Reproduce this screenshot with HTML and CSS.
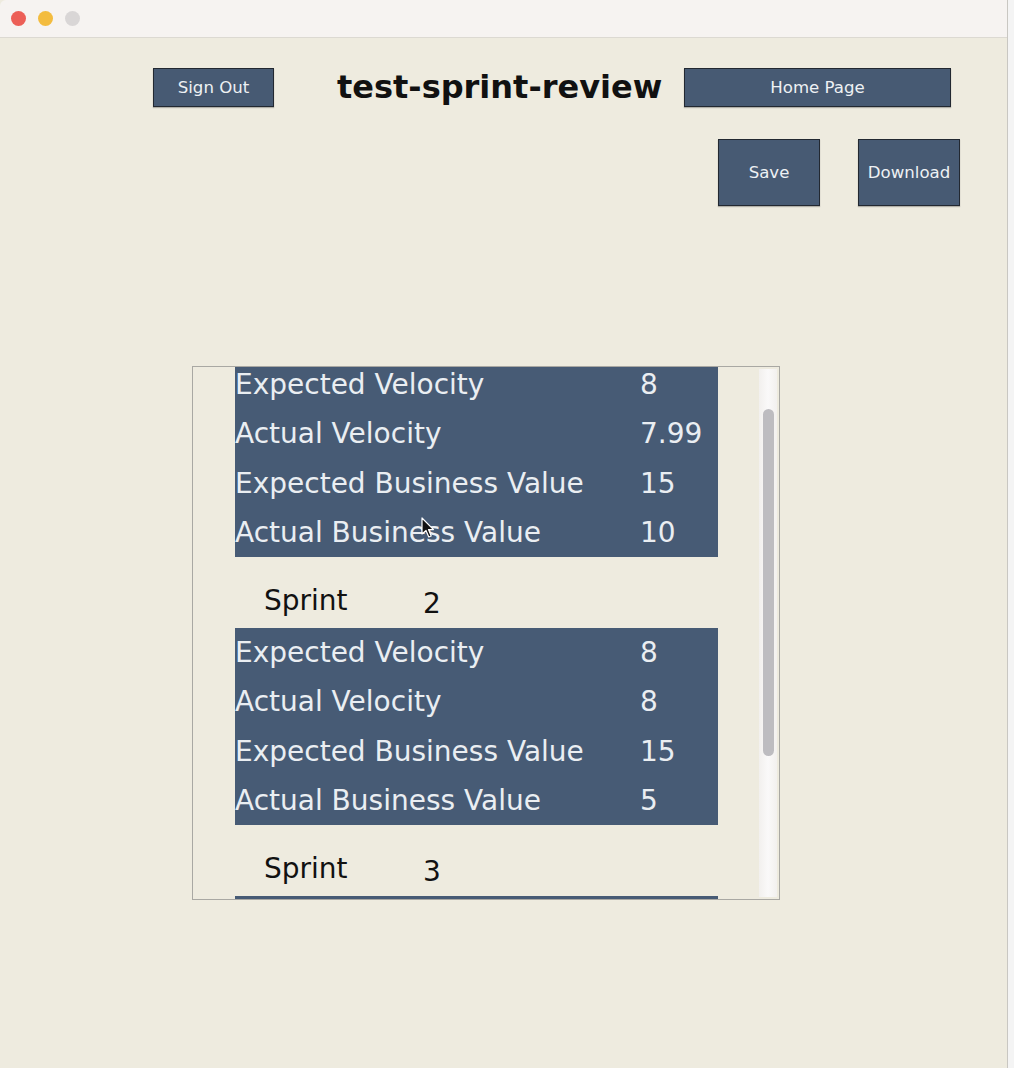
FILE: index.html
```html
<!DOCTYPE html>
<html>
<head>
<meta charset="utf-8">
<link rel="stylesheet" href="styles.css">
</head>
<body>
<div class="screen">
  <div class="window">
    <div class="titlebar">
      <span class="light red"></span>
      <span class="light yellow"></span>
      <span class="light gray"></span>
    </div>
    <div class="content">
      <div class="header">
        <button class="btn btn-signout">Sign Out</button>
        <h1 class="title">test-sprint-review</h1>
        <button class="btn btn-home">Home Page</button>
      </div>
      <div class="actions">
        <button class="btn btn-big">Save</button>
        <button class="btn btn-big">Download</button>
      </div>
      <div class="panel">
        <div class="panel-view">
          <div class="panel-content">
            <div class="block">
              <div class="row"><span class="key">Expected Velocity</span><span class="val">8</span></div>
              <div class="row"><span class="key">Actual Velocity</span><span class="val">7.99</span></div>
              <div class="row"><span class="key">Expected Business Value</span><span class="val">15</span></div>
              <div class="row"><span class="key">Actual Business Value</span><span class="val">10</span></div>
            </div>
            <div class="sprint-label"><span class="sprint-word">Sprint</span><span class="sprint-num">2</span></div>
            <div class="block">
              <div class="row"><span class="key">Expected Velocity</span><span class="val">8</span></div>
              <div class="row"><span class="key">Actual Velocity</span><span class="val">8</span></div>
              <div class="row"><span class="key">Expected Business Value</span><span class="val">15</span></div>
              <div class="row"><span class="key">Actual Business Value</span><span class="val">5</span></div>
            </div>
            <div class="sprint-label"><span class="sprint-word">Sprint</span><span class="sprint-num">3</span></div>
            <div class="block block-peek"></div>
          </div>
        </div>
        <div class="scrollbar"><div class="thumb"></div></div>
        <svg class="cursor" width="14" height="22" viewBox="0 0 14 22">
          <path d="M1 1 L1 17 L5 13.5 L7.8 20 L10.2 19 L7.5 12.6 L12.5 12.6 Z" fill="#111" stroke="#fff" stroke-width="1.2" stroke-linejoin="round"/>
        </svg>
      </div>
    </div>
  </div>
  <div class="edge"></div>
</div>
</body>
</html>
```
FILE: styles.css
```css
* { box-sizing: border-box; }
html, body { margin: 0; padding: 0; }
body {
  width: 1014px;
  height: 1068px;
  overflow: hidden;
  background: #f3f3f3;
  font-family: "DejaVu Sans", "Liberation Sans", sans-serif;
}
.screen {
  display: flex;
  width: 1014px;
  height: 1068px;
}
.window {
  width: 1008px;
  height: 1068px;
  display: flex;
  flex-direction: column;
  background: #eeebdf;
  border-right: 1px solid #c9c7c2;
}
.edge {
  flex: 1;
  background: #f4f4f4;
}
.titlebar {
  height: 38px;
  flex: none;
  background: #f6f3f1;
  border-bottom: 1px solid #dcd9d2;
  display: flex;
  align-items: center;
  padding-left: 11px;
  gap: 12px;
  border-top-left-radius: 6px;
}
.light {
  width: 15px;
  height: 15px;
  border-radius: 50%;
}
.red { background: #ec5f57; }
.yellow { background: #f3bc3f; }
.gray { background: #d9d6d6; }
.content {
  flex: 1;
  padding-top: 30px;
}
.header {
  display: flex;
  align-items: center;
  height: 39px;
  padding-left: 153px;
}
.btn {
  background: #475a73;
  color: #eef1f4;
  border: 1px solid #222831;
  font-family: "DejaVu Sans", sans-serif;
  font-size: 16.6px;
  padding: 0;
  margin: 0;
  box-shadow: 0 1px 1px rgba(0,0,0,0.25);
}
.btn-signout {
  width: 121px;
  height: 39px;
}
.title {
  margin: 0 0 0 63px;
  width: 347px;
  font-size: 32px;
  font-weight: bold;
  color: #111;
  line-height: 39px;
  white-space: nowrap;
}
.btn-home {
  width: 267px;
  height: 39px;
}
.actions {
  display: flex;
  gap: 38px;
  padding-left: 718px;
  margin-top: 32px;
}
.btn-big {
  width: 102px;
  height: 67px;
}
.panel {
  position: relative;
  margin-top: 160px;
  margin-left: 192px;
  width: 588px;
  height: 534px;
  border: 1px solid #a9a8a3;
}
.panel-view {
  width: 100%;
  height: 100%;
  overflow: hidden;
  padding-top: 1px;
}
.panel-content {
  margin-top: -8px;
  padding-left: 42px;
}
.sprint-label {
  height: 71px;
  padding-top: 16px;
  line-height: 55px;
  font-size: 28px;
  color: #111;
  display: flex;
}
.sprint-word {
  margin-left: 29px;
  width: 159px;
}
.sprint-num {
  position: relative;
  top: 3px;
}
.block {
  width: 483px;
  background: #475b75;
  color: #eaeef2;
}
.block-peek {
  height: 60px;
}
.row {
  display: flex;
  height: 49.25px;
  line-height: 49.25px;
  font-size: 28px;
  white-space: nowrap;
}
.key {
  width: 405px;
}
.val {
  flex: 1;
}
.scrollbar {
  position: absolute;
  top: 2px;
  right: 2px;
  width: 18px;
  height: 528px;
  background: linear-gradient(to right, #f2f0ee, #faf9f9 50%, #f2f0ee);
}
.thumb {
  position: absolute;
  top: 40px;
  left: 4px;
  width: 11px;
  height: 347px;
  border-radius: 6px;
  background: #bdbcc0;
}
.cursor {
  position: absolute;
  left: 228px;
  top: 150px;
}
```
